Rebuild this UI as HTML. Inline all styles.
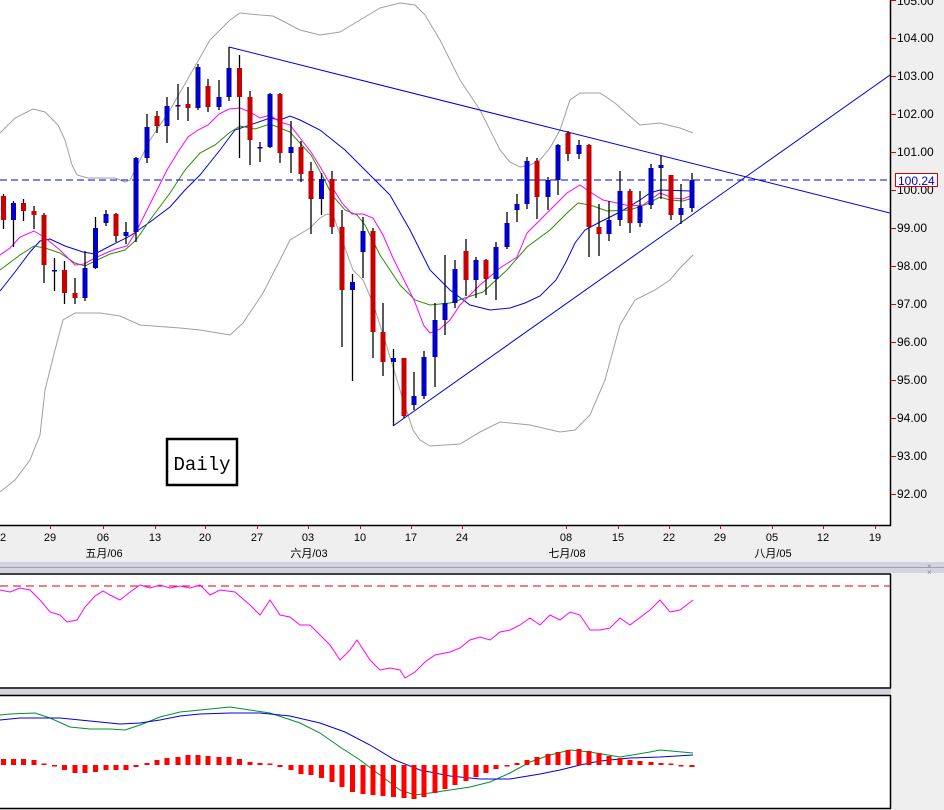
<!DOCTYPE html>
<html><head><meta charset="utf-8"><style>
html,body{margin:0;padding:0;background:#efefef;}
svg{display:block;font-family:"Liberation Sans","Noto Sans CJK SC",sans-serif;}
</style></head><body>
<svg id="s" width="944" height="810" viewBox="0 0 944 810" xmlns="http://www.w3.org/2000/svg">
<rect x="0" y="0" width="944" height="810" fill="#efefef"/>
<rect x="0" y="0" width="890" height="525" fill="#fff"/>
<line x1="890.5" y1="0" x2="890.5" y2="526" stroke="#000" stroke-width="1.5"/>
<line x1="0" y1="525.5" x2="891" y2="525.5" stroke="#000" stroke-width="1.5"/>
<g font-size="12" fill="#000">
<text x="897" y="5">105.00</text><text x="897" y="42">104.00</text><text x="897" y="80">103.00</text><text x="897" y="118">102.00</text><text x="897" y="156">101.00</text><text x="897" y="194">100.00</text><text x="897" y="232">99.00</text><text x="897" y="270">98.00</text><text x="897" y="308">97.00</text><text x="897" y="346">96.00</text><text x="897" y="384">95.00</text><text x="897" y="422">94.00</text><text x="897" y="460">93.00</text><text x="897" y="498">92.00</text>
</g>
<g stroke="#e00000" stroke-width="1">
<line x1="891" y1="0.5" x2="896" y2="0.5"/><line x1="891" y1="38.5" x2="896" y2="38.5"/><line x1="891" y1="76.5" x2="896" y2="76.5"/><line x1="891" y1="114.5" x2="896" y2="114.5"/><line x1="891" y1="152.5" x2="896" y2="152.5"/><line x1="891" y1="190.5" x2="896" y2="190.5"/><line x1="891" y1="228.5" x2="896" y2="228.5"/><line x1="891" y1="266.5" x2="896" y2="266.5"/><line x1="891" y1="304.5" x2="896" y2="304.5"/><line x1="891" y1="342.5" x2="896" y2="342.5"/><line x1="891" y1="380.5" x2="896" y2="380.5"/><line x1="891" y1="418.5" x2="896" y2="418.5"/><line x1="891" y1="456.5" x2="896" y2="456.5"/><line x1="891" y1="494.5" x2="896" y2="494.5"/>
</g>
<rect x="895.5" y="173.5" width="42" height="13" fill="#fff" stroke="#e00000"/>
<text x="898" y="185" font-size="12" fill="#0000e0">100.24</text>
<!-- date axis -->
<g stroke="#e00000"><line x1="50.5" y1="526" x2="50.5" y2="529"/><line x1="103.5" y1="526" x2="103.5" y2="529"/><line x1="155.5" y1="526" x2="155.5" y2="529"/><line x1="205.5" y1="526" x2="205.5" y2="529"/><line x1="257.5" y1="526" x2="257.5" y2="529"/><line x1="308.5" y1="526" x2="308.5" y2="529"/><line x1="360.5" y1="526" x2="360.5" y2="529"/><line x1="411.5" y1="526" x2="411.5" y2="529"/><line x1="462.5" y1="526" x2="462.5" y2="529"/><line x1="566.5" y1="526" x2="566.5" y2="529"/><line x1="618.5" y1="526" x2="618.5" y2="529"/><line x1="669.5" y1="526" x2="669.5" y2="529"/><line x1="720.5" y1="526" x2="720.5" y2="529"/><line x1="772.5" y1="526" x2="772.5" y2="529"/><line x1="823.5" y1="526" x2="823.5" y2="529"/><line x1="875.5" y1="526" x2="875.5" y2="529"/></g>
<g font-size="11" fill="#000" text-anchor="middle">
<text x="3" y="541">2</text><text x="50" y="541">29</text><text x="103" y="541">06</text><text x="155" y="541">13</text><text x="205" y="541">20</text><text x="257" y="541">27</text><text x="308" y="541">03</text><text x="360" y="541">10</text><text x="411" y="541">17</text><text x="462" y="541">24</text><text x="566" y="541">08</text><text x="618" y="541">15</text><text x="669" y="541">22</text><text x="720" y="541">29</text><text x="772" y="541">05</text><text x="823" y="541">12</text><text x="875" y="541">19</text>
<text x="104" y="557">五月/06</text><text x="309" y="557">六月/03</text><text x="567" y="557">七月/08</text><text x="773" y="557">八月/05</text>
</g>
<!-- separators -->
<rect x="0" y="562" width="944" height="11" fill="#d4d4e0"/>
<line x1="0" y1="567.5" x2="944" y2="567.5" stroke="#a0a0b8"/>
<text x="927" y="569" font-size="8" fill="#8888a0">×</text><text x="927" y="575" font-size="8" fill="#8888a0">×</text>
<rect x="0" y="573" width="890" height="115" fill="#fff"/>
<line x1="0" y1="574" x2="891" y2="574" stroke="#000" stroke-width="1.5"/>
<line x1="0" y1="688" x2="891" y2="688" stroke="#000" stroke-width="1.5"/>
<line x1="890.5" y1="574" x2="890.5" y2="688" stroke="#000" stroke-width="1.5"/>
<rect x="0" y="689" width="891" height="6" fill="#d4d4e0"/>
<rect x="0" y="695" width="890" height="113" fill="#fff"/>
<line x1="0" y1="695.5" x2="891" y2="695.5" stroke="#000" stroke-width="1.5"/>
<line x1="0" y1="808.5" x2="891" y2="808.5" stroke="#000" stroke-width="1.5"/>
<line x1="890.5" y1="695" x2="890.5" y2="809" stroke="#000" stroke-width="1.5"/>
<line x1="0" y1="586" x2="890" y2="586" stroke="#e00000" stroke-dasharray="8,5"/>
<!-- bollinger -->
<g fill="none" stroke="#a0a0a0" stroke-width="1">
<polyline points="0,133 15,118 33,109 45,112 58,125 65,140 72,165 77,175 88,178 115,178 125,182 130,180 140,160 150,140 170,110 190,75 210,40 230,20 240,13 260,15 273,16 300,30 320,35 340,32 360,20 380,8 400,3 415,5 425,15 440,40 460,80 480,110 500,150 510,162 520,167 530,165 540,160 550,148 560,130 570,100 580,93 600,93 615,103 625,112 640,125 660,123 680,128 693,133"/>
<polyline points="0,492 15,480 30,460 40,435 45,390 55,350 63,320 75,313 100,313 120,316 140,325 180,328 200,330 230,335 243,323 263,293 280,260 290,240 310,228 320,218 327,214 333,215 353,270 363,280 373,303 387,347 403,400 413,430 420,440 430,446 460,444 480,432 500,422 530,425 560,432 575,430 590,415 605,380 620,325 635,300 655,290 670,280 680,268 693,255"/>
</g>
<g fill="none" stroke-width="1">
<polyline stroke="#0000e0" points="0,291 15,272 30,252 40,241 50,239 65,246 83,252 95,254 110,246 130,236 150,222 170,207 185,190 200,175 220,150 235,130 250,125 270,118 280,120 290,116 300,120 320,130 345,150 365,170 390,195 410,230 430,270 450,290 470,305 490,310 510,308 525,303 540,296 556,280 566,262 575,243 585,230 600,222 620,212 640,200 650,193 660,190 690,191 693,193"/>
<polyline stroke="#2a9000" points="0,270 20,255 34,246 45,248 60,253 75,263 85,266 95,261 110,254 125,250 136,240 150,220 170,193 185,170 200,153 215,145 229,133 240,126 255,129 270,124 280,128 290,132 300,143 311,155 322,175 332,195 345,210 357,215 365,225 380,255 400,285 415,300 430,305 450,303 483,292 507,270 527,247 550,230 567,213 578,203 590,205 607,211 630,210 647,204 660,197 670,200 683,201 693,198"/>
<polyline stroke="#ff00ff" points="0,255 10,248 20,237 34,231 44,237 60,250 75,265 84,264 95,258 106,253 116,249 127,246 136,232 147,210 157,190 167,170 178,152 188,137 198,130 208,125 219,114 229,109 240,108 250,112 260,118 270,115 280,122 290,125 300,138 311,152 322,170 332,187 342,203 352,214 363,214 373,218 383,235 393,258 404,280 414,300 424,326 430,333 440,329 450,320 460,305 480,285 500,268 517,257 527,233 550,210 567,193 580,185 590,192 603,200 617,203 630,206 643,205 660,193 673,198 683,199 693,195"/>
</g>
<line x1="0" y1="180" x2="890" y2="180" stroke="#0000e0" stroke-dasharray="7,4"/>
<line x1="229" y1="47" x2="890" y2="213" stroke="#0000e0"/>
<line x1="393" y1="426" x2="890" y2="75" stroke="#0000e0"/>
<g id="c"></g>
<rect x="167" y="439" width="70" height="46" fill="#fff" stroke="#000" stroke-width="2.5"/>
<text x="202" y="470" font-family="Liberation Mono, monospace" font-size="19" text-anchor="middle" fill="#000">Daily</text>
<!-- RSI -->
<polyline fill="none" stroke="#ff00ff" points="0,590 10,592 20,588 30,590 40,600 50,612 60,615 67,622 77,620 85,607 95,596 103,591 110,595 120,600 130,592 140,585 150,588 160,585 170,588 180,586 190,588 200,585 210,595 220,590 235,592 250,605 260,615 270,600 280,615 290,617 300,625 310,625 320,635 330,645 340,660 350,650 357,640 370,660 380,670 390,668 400,670 405,678 415,672 425,662 435,655 450,652 460,648 470,640 480,637 490,640 500,632 510,630 520,625 530,618 540,625 550,615 560,620 570,612 580,615 590,630 600,630 610,628 620,618 630,625 650,610 660,600 670,612 680,610 693,600"/>
<!-- MACD -->
<polyline fill="none" stroke="#009030" points="0,715 10,714 35,713 50,718 70,727 90,729 110,729 125,730 140,725 160,717 180,712 200,710 230,707 250,710 270,713 300,723 320,733 340,747 360,760 380,775 400,790 415,795 430,793 450,790 470,787 490,782 510,773 530,762 550,755 570,750 590,752 620,757 650,752 660,750 693,753"/>
<polyline fill="none" stroke="#0000e0" points="0,720 20,718 60,718 100,722 120,724 140,723 160,720 180,716 200,714 230,713 260,713 290,716 320,723 345,732 370,745 395,760 420,770 450,776 480,779 510,779 540,774 560,770 580,765 600,761 630,758 660,757 693,755"/>
<g id="h" fill="#ff0000"></g>
</svg>
<script>
var C=[[3.5,196,220,194,229,'r'],[13.5,203,220,201,247,'b'],[23.5,203,211,199,221,'r'],[34,211,215,206,229,'r'],[44,215,265,213,283,'r'],[54.5,270,271,258,291,'b'],[64.5,270,293,261,304,'r'],[75,293,298,278,304,'r'],[85,268,298,251,301,'b'],[95.5,228,268,217,269,'b'],[106,214,223,210,226,'b'],[116,214,236,213,242,'r'],[126,232,236,222,244,'b'],[136,158,232,157,242,'b'],[147,127,158,114,163,'b'],[157,116,126,111,133,'r'],[167,106,126,97,143,'b'],[178,105,106,84,120,'b'],[188,104,108,87,121,'r'],[198,67,108,64,110,'b'],[208,86,107,79,112,'r'],[219,97,107,80,110,'b'],[229,68,97,47,101,'b'],[239.5,68,97,55,158,'r'],[250,97,140,91,165,'r'],[260,147,148,142,162,'b'],[270,94,147,93,148,'b'],[280,94,153,93,163,'r'],[291,147,153,121,173,'b'],[301,147,174,141,182,'r'],[311,171,199,162,234,'r'],[321.5,179,199,173,215,'b'],[332,179,227,171,234,'r'],[342,227,290,210,347,'r'],[352.5,282,290,274,381,'b'],[363,231,252,217,278,'b'],[373,231,332,228,358,'r'],[383,332,362,303,376,'r'],[393.5,358,362,349,426,'b'],[404,358,416,358,418,'r'],[414,396,405,372,410,'b'],[424,357,396,351,399,'b'],[435,320,357,303,387,'b'],[445,303,320,255,335,'b'],[455,269,303,260,308,'b'],[466,251,280,239,296,'r'],[476,260,280,257,298,'b'],[486,260,279,259,295,'r'],[496,247,279,242,300,'b'],[507,223,247,212,249,'b'],[517,204,210,194,222,'b'],[527,161,204,157,209,'b'],[537,161,197,158,219,'r'],[548,180,197,177,210,'b'],[558,145,180,144,195,'b'],[568,133,154,131,161,'r'],[579,145,154,140,159,'b'],[589,145,227,144,257,'r'],[599,227,234,204,256,'r'],[609,220,234,201,241,'b'],[620,191,220,171,226,'b'],[630,191,223,189,233,'r'],[640,206,223,191,227,'b'],[651,168,205,164,209,'b'],[661,165,168,156,199,'b'],[671,175,215,175,220,'r'],[681,208,215,184,224,'b'],[692,180,208,173,212,'b']];
var s='',NS='';
C.forEach(function(c){var x=c[0],col=c[5]=='r'?'#c80000':'#0000c8';
s+='<line x1="'+x+'" y1="'+c[3]+'" x2="'+x+'" y2="'+c[4]+'" stroke="#000" stroke-width="1.3"/>';
var h=Math.max(c[2]-c[1],1.5);s+='<rect x="'+(x-2.5)+'" y="'+c[1]+'" width="5" height="'+h+'" fill="'+col+'"/>';});
document.getElementById('c').innerHTML=s;
var H=[6,6,6,5,1,-1,-5,-8,-8,-7,-5,-5,-5,-2,2,5,7,8,10,10,9,8,8,6,3,2,0,-2,-5,-9,-10,-13,-17,-22,-27,-29,-30,-31,-32,-33,-34,-32,-28,-24,-20,-16,-12,-8,-4,-1,2,5,8,11,13,15,16,14,12,9,7,5,4,3,2,1,-1,-2];
var t='';H.forEach(function(v,i){var x=C[i]?C[i][0]:3.5+10.3*i;var y=v>=0?765-v:765,hh=Math.max(Math.abs(v),1.5);t+='<rect x="'+(x-2.5)+'" y="'+(v>=0?765-hh:765)+'" width="5" height="'+hh+'"/>';});
document.getElementById('h').innerHTML=t;
</script>
</body></html>
